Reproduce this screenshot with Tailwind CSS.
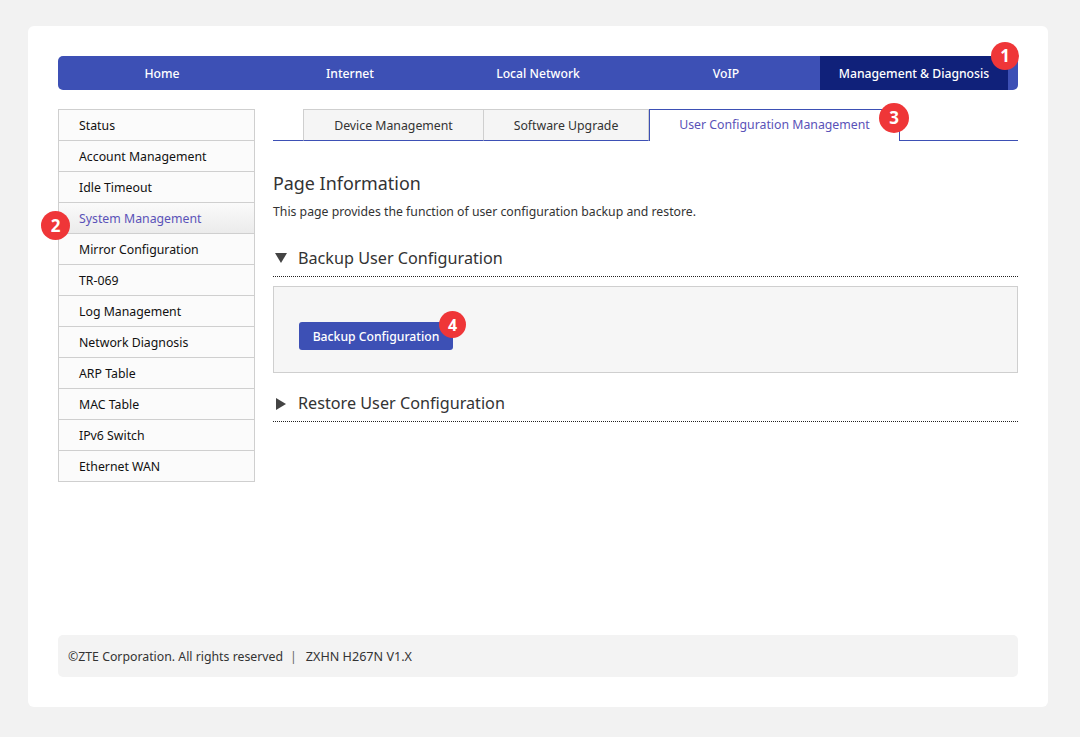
<!DOCTYPE html>
<html lang="en">
  <head>
    <meta charset="UTF-8" />
    <title>ZXHN H267N</title>
    <script src="https://cdn.jsdelivr.net/npm/@tailwindcss/browser@4"></script>
  </head>
  <body class="bg-[#f2f2f2] font-['Noto_Sans',sans-serif] text-[12.3px] text-[#222]">
    <div class="ml-[28px] mt-[26px] h-[681px] w-[1020px] rounded-md bg-white px-[30px] pt-[30px] flex flex-col">
      <!-- Top nav -->
      <nav class="relative flex h-[34px] shrink-0 rounded-[5px] bg-[#3d50b5] px-[10px] text-[12.2px] font-medium text-white">
        <a class="flex w-[188px] items-center justify-center pt-[2px]">Home</a>
        <a class="flex w-[188px] items-center justify-center pt-[2px]">Internet</a>
        <a class="flex w-[188px] items-center justify-center pt-[2px]">Local Network</a>
        <a class="flex w-[188px] items-center justify-center pt-[2px]">VoIP</a>
        <a class="flex w-[188px] items-center justify-center bg-[#10217a] pt-[2px]">Management &amp; Diagnosis</a>
        <span class="absolute left-[933px] top-[-14px] flex h-[28px] w-[28px] items-center justify-center rounded-full bg-[#ef3638] text-[17px] font-bold text-white">1</span>
      </nav>

      <div class="mt-[19px] flex flex-1 gap-[18px]">
        <!-- Side menu -->
        <ul class="relative h-[373px] w-[197px] shrink-0 border border-[#cfcfcf] bg-[#fbfbfb] text-[#111]">
          <li class="flex h-[31px] items-center border-b border-[#cfcfcf] pl-[20px] pt-[2px]">Status</li>
          <li class="flex h-[31px] items-center border-b border-[#cfcfcf] pl-[20px] pt-[2px]">Account Management</li>
          <li class="flex h-[31px] items-center border-b border-[#cfcfcf] pl-[20px] pt-[2px]">Idle Timeout</li>
          <li class="flex h-[31px] items-center border-b border-[#cfcfcf] bg-gradient-to-b from-[#fafafa] to-[#ebebeb] pl-[20px] pt-[2px] text-[#5a52b8]">System Management</li>
          <li class="flex h-[31px] items-center border-b border-[#cfcfcf] pl-[20px] pt-[2px]">Mirror Configuration</li>
          <li class="flex h-[31px] items-center border-b border-[#cfcfcf] pl-[20px] pt-[2px]">TR-069</li>
          <li class="flex h-[31px] items-center border-b border-[#cfcfcf] pl-[20px] pt-[2px]">Log Management</li>
          <li class="flex h-[31px] items-center border-b border-[#cfcfcf] pl-[20px] pt-[2px]">Network Diagnosis</li>
          <li class="flex h-[31px] items-center border-b border-[#cfcfcf] pl-[20px] pt-[2px]">ARP Table</li>
          <li class="flex h-[31px] items-center border-b border-[#cfcfcf] pl-[20px] pt-[2px]">MAC Table</li>
          <li class="flex h-[31px] items-center border-b border-[#cfcfcf] pl-[20px] pt-[2px]">IPv6 Switch</li>
          <li class="flex h-[30px] items-center pl-[20px] pt-[2px]">Ethernet WAN</li>
          <span class="absolute left-[-18px] top-[101px] flex h-[29px] w-[29px] items-center justify-center rounded-full bg-[#ef3638] text-[17px] font-bold text-white">2</span>
        </ul>

        <!-- Main column -->
        <main class="min-w-0 flex-1">
          <div class="relative flex h-[32px]">
            <div class="w-[30px] border-b border-[#3d50b5]"></div>
            <div class="flex w-[181px] items-center justify-center border border-b-[#3d50b5] border-[#cfcfcf] bg-[#f5f5f5] pt-[2px] text-[#333]">Device Management</div>
            <div class="flex w-[165px] items-center justify-center border border-l-0 border-b-[#3d50b5] border-[#cfcfcf] bg-[#f5f5f5] pt-[2px] text-[#333]">Software Upgrade</div>
            <div class="flex w-[251px] items-center justify-center border border-b-0 border-[#3d50b5] bg-white text-[#5a52b8]">User Configuration Management</div>
            <div class="flex-1 border-b border-[#3d50b5]"></div>
            <span class="absolute left-[606px] top-[-6px] flex h-[30px] w-[30px] items-center justify-center rounded-full bg-[#ef3638] text-[17px] font-bold text-white">3</span>
          </div>

          <h1 class="mt-[29px] text-[17.9px] leading-[26px] text-[#333]">Page Information</h1>
          <p class="mt-[6px] pt-[1px] text-[12.26px] leading-[18px] text-[#333]">This page provides the function of user configuration backup and restore.</p>

          <!-- Backup section -->
          <div class="mt-[20px] flex h-[36px] items-center border-b border-dotted border-[#222] pb-[1px]">
            <svg class="ml-[2px] h-[10px] w-[12px] text-[#444]" viewBox="0 0 12 10"><path d="M0 0h12L6 10z" fill="currentColor" /></svg>
            <span class="ml-[11px] text-[16.2px] text-[#333]">Backup User Configuration</span>
          </div>
          <div class="mt-[9px] h-[87px] border border-[#cfcfcf] bg-[#f6f6f6] pl-[25px] pt-[35px]">
            <div class="relative inline-block">
              <button class="flex h-[28px] w-[154px] items-center justify-center rounded-[3px] bg-[#3d50b5] pt-[2px] text-[12.2px] font-medium text-white">Backup Configuration</button>
              <span class="absolute left-[140px] top-[-11px] flex h-[27px] w-[27px] items-center justify-center rounded-full bg-[#ef3638] text-[16px] font-bold text-white">4</span>
            </div>
          </div>

          <!-- Restore section -->
          <div class="mt-[12px] flex h-[37px] items-center border-b border-dotted border-[#222] pt-[1px]">
            <svg class="ml-[3px] h-[12px] w-[10px] text-[#444]" viewBox="0 0 10 12"><path d="M0 0l10 6L0 12z" fill="currentColor" /></svg>
            <span class="ml-[12px] text-[16.2px] text-[#333]">Restore User Configuration</span>
          </div>
        </main>
      </div>

      <footer class="mb-[30px] flex h-[42px] shrink-0 items-center rounded-[5px] bg-[#f3f3f3] pl-[10px] pt-[2px] text-[12.3px] text-[#333]">
        <span>©ZTE Corporation. All rights reserved</span>
        <span class="ml-[7px] text-[#666]">|</span>
        <span class="ml-[9px] text-[12.6px]">ZXHN H267N V1.X</span>
      </footer>
    </div>
  </body>
</html>
